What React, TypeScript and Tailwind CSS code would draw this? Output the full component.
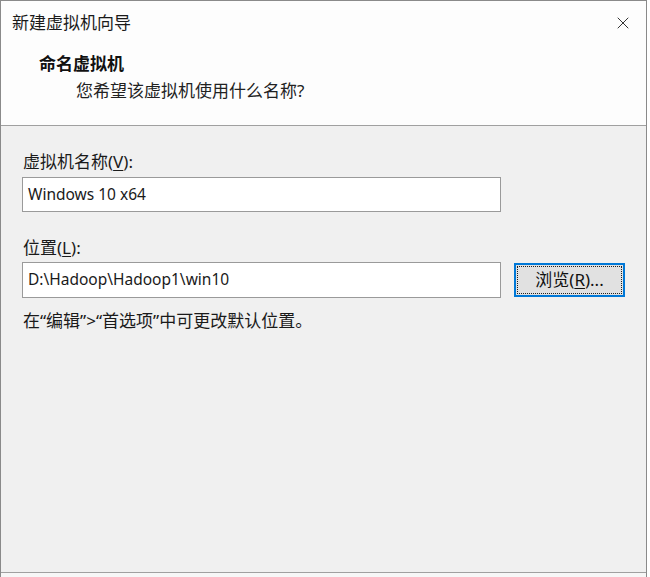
import { X } from 'lucide-react';

const font = { fontFamily: '"Noto Sans", "Noto Sans CJK SC", sans-serif' };

export default function App() {
    return (
        <div className="h-[577px] w-[650px] overflow-hidden bg-white" style={font}>
            <div className="flex h-full w-[647px] flex-col border-x border-t border-[#8a8a8a] bg-[#f0f0f0]">
                {/* header */}
                <div className="h-[125px] border-b border-[#a0a0a0] bg-[#fdfdfd]">
                    <div className="flex h-[44px] items-center justify-between pl-[11px] pr-[13px]">
                        <span className="text-[17px] text-[#1a1a1a]">新建虚拟机向导</span>
                        <X className="h-[20px] w-[20px] text-[#333]" strokeWidth={1.2} />
                    </div>
                    <div className="pl-[38px] pt-[8px] text-[17px] leading-[22px] font-bold text-[#111]">命名虚拟机</div>
                    <div className="pl-[75px] pt-[5px] text-[17px] leading-[22px] text-[#222]">
                        您希望该虚拟机使用什么名称?
                    </div>
                </div>

                {/* body */}
                <div className="flex-1 px-[21px] pt-[24px] text-[17px] text-[#1a1a1a]">
                    <div className="pl-[1px] leading-[24px]">
                        虚拟机名称(<span className="underline underline-offset-2">V</span>):
                    </div>
                    <div className="mt-[3px] flex h-[35px] w-[479px] items-center border border-[#9a9a9a] bg-white px-[5px] text-[15.5px]">
                        Windows 10 x64
                    </div>

                    <div className="mt-[24px] pl-[1px] leading-[24px]">
                        位置(<span className="underline underline-offset-2">L</span>):
                    </div>
                    <div className="mt-[2px] flex items-center gap-[13px]">
                        <div className="flex h-[36px] w-[479px] items-center border border-[#9a9a9a] bg-white px-[5px] text-[15.5px]">
                            D:\Hadoop\Hadoop1\win10
                        </div>
                        <button
                            type="button"
                            className="flex h-[34px] w-[111px] items-center justify-center border-2 border-[#0078d7] bg-[#e1e1e1] text-[17px] text-[#111] outline-1 outline-dotted -outline-offset-[4px] outline-[#222]"
                        >
                            浏览(<span className="underline underline-offset-2">R</span>)...
                        </button>
                    </div>
                    <div className="mt-[11px] pl-[1px] leading-[24px]">在“编辑”&gt;“首选项”中可更改默认位置。</div>
                </div>

                {/* footer edge */}
                <div className="h-[5px] border-t border-[#a0a0a0] bg-[#f7f7f7]" />
            </div>
        </div>
    );
}
